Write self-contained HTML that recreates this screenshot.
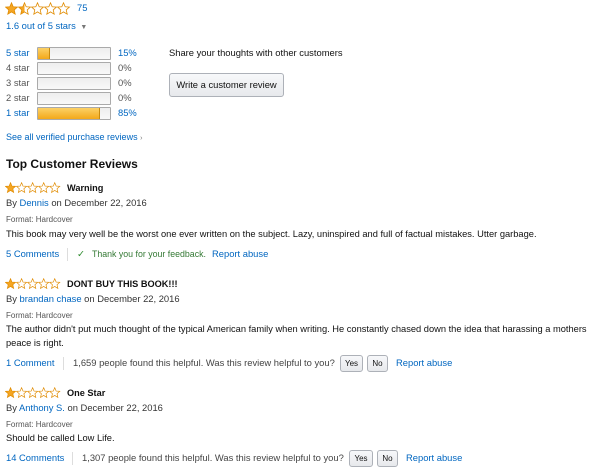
<!DOCTYPE html>
<html><head><meta charset="utf-8"><style>
body{margin:0;width:600px;height:474px;background:#fff;font-family:"Liberation Sans",Arial,sans-serif;font-size:9.4px;color:#111;position:relative;overflow:hidden}
.a{position:absolute;white-space:nowrap;line-height:14px}
.l{color:#0066c0}
.g{color:#555}
.bar{position:absolute;left:37px;width:72px;height:11px;border:1px solid #aaa;border-radius:1px;background:linear-gradient(#eee,#f8f8f8)}
.fill{height:100%;background:linear-gradient(#fcd166,#f3a81a);border-right:1px solid #c88a0d}
.btn{position:absolute;border:1px solid #adb1b8;border-radius:3px;background:linear-gradient(#f7f8fa,#e7e9ec);font-size:8px;text-align:center;line-height:15px;height:15px;white-space:nowrap}
.sep{position:absolute;width:1px;height:13px;background:#ddd}
.small{font-size:8px;color:#555}
.b{font-weight:bold}
.t{font-size:9.3px}
</style></head><body>
<svg width="0" height="0" style="position:absolute"><defs>
<polygon id="s" points="6.5,0.8 8.2,4.8 12.4,5.1 9.2,7.9 10.2,12.2 6.5,9.9 2.8,12.2 3.8,7.9 0.6,5.1 4.8,4.8"/>
<linearGradient id="h"><stop offset="50%" stop-color="#f5a623"/><stop offset="50%" stop-color="#fff"/></linearGradient>
</defs></svg>

<svg class="a" style="left:5px;top:2px" width="70" height="14"><g stroke="#e08b00" stroke-width="0.8">
<use href="#s" fill="#f5a623"/><use href="#s" x="13" fill="url(#h)"/><use href="#s" x="26" fill="#fff"/><use href="#s" x="39" fill="#fff"/><use href="#s" x="52" fill="#fff"/></g></svg>
<div class="a l" style="left:77px;top:1px">75</div>
<div class="a l" style="left:6px;top:19px">1.6 out of 5 stars <span style="color:#777;font-size:7px">&nbsp;▼</span></div>

<div class="a l" style="left:6px;top:46px">5 star</div><div class="bar" style="top:47px"><div class="fill" style="width:15%"></div></div><div class="a l" style="left:118px;top:46px">15%</div>
<div class="a g" style="left:6px;top:61px">4 star</div><div class="bar" style="top:62px"></div><div class="a g" style="left:118px;top:61px">0%</div>
<div class="a g" style="left:6px;top:76px">3 star</div><div class="bar" style="top:77px"></div><div class="a g" style="left:118px;top:76px">0%</div>
<div class="a g" style="left:6px;top:91px">2 star</div><div class="bar" style="top:92px"></div><div class="a g" style="left:118px;top:91px">0%</div>
<div class="a l" style="left:6px;top:106px">1 star</div><div class="bar" style="top:107px"><div class="fill" style="width:85%"></div></div><div class="a l" style="left:118px;top:106px">85%</div>

<div class="a" style="left:169px;top:46px">Share your thoughts with other customers</div>
<div style="position:absolute;left:169px;top:73px;width:113px;height:22px;border:1px solid #adb1b8;border-radius:3px;background:linear-gradient(#f7f8fa,#e7e9ec);line-height:22px;text-align:center;white-space:nowrap">Write a customer review</div>

<div class="a l" style="left:6px;top:130px;font-size:9px">See all verified purchase reviews <span style="font-size:7px;color:#777">›</span></div>
<div class="a b" style="left:6px;top:157px;font-size:12px">Top Customer Reviews</div>

<!-- review 1 -->
<svg class="a" style="left:5px;top:182px" width="62" height="14"><g stroke="#e08b00" stroke-width="0.8" transform="scale(0.85)">
<use href="#s" fill="#f5a623"/><use href="#s" x="13" fill="#fff"/><use href="#s" x="26" fill="#fff"/><use href="#s" x="39" fill="#fff"/><use href="#s" x="52" fill="#fff"/></g></svg>
<div class="a b" style="left:67px;top:181px;font-size:9.2px">Warning</div>
<div class="a" style="left:6px;top:196px;color:#333">By <span class="l">Dennis</span> on December 22, 2016</div>
<div class="a small" style="left:6px;top:213px">Format: Hardcover</div>
<div class="a t" style="left:6px;top:227px">This book may very well be the worst one ever written on the subject. Lazy, uninspired and full of factual mistakes. Utter garbage.</div>
<div class="a l" style="left:6px;top:247px">5 Comments</div><div class="sep" style="left:67px;top:248px"></div>
<div class="a" style="left:77px;top:247px;color:#2c8a2c">✓</div>
<div class="a" style="left:92px;top:247px;color:#357a35;font-size:8.8px">Thank you for your feedback.</div>
<div class="a l" style="left:212px;top:247px">Report abuse</div>

<!-- review 2 -->
<svg class="a" style="left:5px;top:278px" width="62" height="14"><g stroke="#e08b00" stroke-width="0.8" transform="scale(0.85)">
<use href="#s" fill="#f5a623"/><use href="#s" x="13" fill="#fff"/><use href="#s" x="26" fill="#fff"/><use href="#s" x="39" fill="#fff"/><use href="#s" x="52" fill="#fff"/></g></svg>
<div class="a b" style="left:67px;top:277px;font-size:9.2px">DONT BUY THIS BOOK!!!</div>
<div class="a" style="left:6px;top:292px;color:#333">By <span class="l">brandan chase</span> on December 22, 2016</div>
<div class="a small" style="left:6px;top:309px">Format: Hardcover</div>
<div class="a t" style="left:6px;top:322px">The author didn't put much thought of the typical American family when writing. He constantly chased down the idea that harassing a mothers</div>
<div class="a t" style="left:6px;top:336px">peace is right.</div>
<div class="a l" style="left:6px;top:356px">1 Comment</div><div class="sep" style="left:63px;top:357px"></div>
<div class="a" style="left:73px;top:356px;color:#444">1,659 people found this helpful. Was this review helpful to you?</div>
<div class="btn" style="left:340px;top:355px;width:21px">Yes</div>
<div class="btn" style="left:367px;top:355px;width:19px">No</div>
<div class="a l" style="left:396px;top:356px">Report abuse</div>

<!-- review 3 -->
<svg class="a" style="left:5px;top:387px" width="62" height="14"><g stroke="#e08b00" stroke-width="0.8" transform="scale(0.85)">
<use href="#s" fill="#f5a623"/><use href="#s" x="13" fill="#fff"/><use href="#s" x="26" fill="#fff"/><use href="#s" x="39" fill="#fff"/><use href="#s" x="52" fill="#fff"/></g></svg>
<div class="a b" style="left:67px;top:386px;font-size:9.2px">One Star</div>
<div class="a" style="left:6px;top:401px;color:#333">By <span class="l">Anthony S.</span> on December 22, 2016</div>
<div class="a small" style="left:6px;top:418px">Format: Hardcover</div>
<div class="a t" style="left:6px;top:431px">Should be called Low Life.</div>
<div class="a l" style="left:6px;top:451px">14 Comments</div><div class="sep" style="left:72px;top:452px"></div>
<div class="a" style="left:82px;top:451px;color:#444">1,307 people found this helpful. Was this review helpful to you?</div>
<div class="btn" style="left:349px;top:450px;width:22px">Yes</div>
<div class="btn" style="left:377px;top:450px;width:19px">No</div>
<div class="a l" style="left:406px;top:451px">Report abuse</div>
</body></html>
